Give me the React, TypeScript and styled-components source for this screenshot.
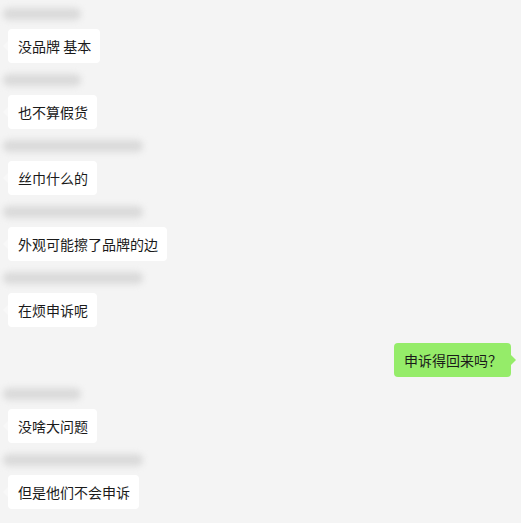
import React from 'react';
import styled, { createGlobalStyle } from 'styled-components';

const GlobalStyle = createGlobalStyle`
  html, body {
    margin: 0;
    padding: 0;
    background: #f4f4f4;
  }
  body {
    font-family: "Noto Sans CJK SC", "Noto Sans", sans-serif;
  }
`;

const Chat = styled.div`
  width: 521px;
  height: 523px;
  overflow: hidden;
  box-sizing: border-box;
  padding: 8px 0 0 0;
  display: flex;
  flex-direction: column;
  gap: 11px;
  background: #f4f4f4;
`;

const Group = styled.div<{ $mine?: boolean }>`
  display: flex;
  flex-direction: column;
  align-items: ${(p) => (p.$mine ? 'flex-end' : 'flex-start')};
  gap: 9px;
  padding: ${(p) => (p.$mine ? '5px 10px 0 0' : '0 0 0 8px')};
`;

const Name = styled.div<{ $long?: boolean }>`
  width: ${(p) => (p.$long ? '140px' : '78px')};
  height: 12px;
  margin-left: -5px;
  border-radius: 6px;
  background: #dadada;
  filter: blur(3px);
`;

const Bubble = styled.div<{ $mine?: boolean }>`
  position: relative;
  box-sizing: border-box;
  height: 34px;
  padding: 0 9px 0 10px;
  display: flex;
  align-items: center;
  font-size: 14px;
  line-height: 20px;
  color: #1a1a1a;
  white-space: nowrap;
  border-radius: 4px;
  background: ${(p) => (p.$mine ? '#95ec69' : '#ffffff')};

  &::after {
    content: '';
    position: absolute;
    top: 12px;
    ${(p) => (p.$mine ? 'right: -5px;' : 'left: -5px;')}
    border-top: 5px solid transparent;
    border-bottom: 5px solid transparent;
    ${(p) =>
      p.$mine
        ? 'border-left: 5px solid #95ec69;'
        : 'border-right: 5px solid #f8f8f8;'}
  }
`;

type Msg = { text: string; mine?: boolean; long?: boolean };

const messages: Msg[] = [
  { text: '没品牌 基本' },
  { text: '也不算假货' },
  { text: '丝巾什么的', long: true },
  { text: '外观可能擦了品牌的边', long: true },
  { text: '在烦申诉呢', long: true },
  { text: '申诉得回来吗？', mine: true },
  { text: '没啥大问题' },
  { text: '但是他们不会申诉', long: true },
];

export default function App() {
  return (
    <>
      <GlobalStyle />
      <Chat>
        {messages.map((m, i) => (
          <Group key={i} $mine={m.mine}>
            {!m.mine && <Name $long={m.long} />}
            <Bubble $mine={m.mine}>{m.text}</Bubble>
          </Group>
        ))}
      </Chat>
    </>
  );
}
